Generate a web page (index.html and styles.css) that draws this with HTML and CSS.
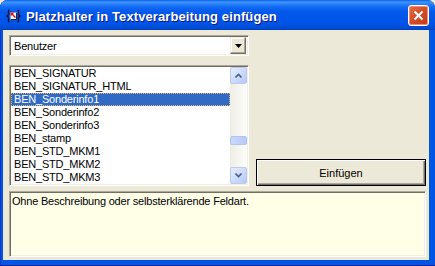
FILE: index.html
```html
<!DOCTYPE html>
<html lang="de">
    <head>
        <meta charset="UTF-8">
        <title>Platzhalter in Textverarbeitung einfügen</title>
        <link rel="stylesheet" href="styles.css">
    </head>
    <body>
        <div class="window">
            <div class="titlebar">
                <svg class="app-icon" width="15" height="14" viewBox="0 0 15 14">
                    <path d="M3.5 1.5 H2.5 V5.5 L1 7 L2.5 8.5 V12.5 H3.5" fill="none" stroke="#1a1030" stroke-width="1.3"/>
                    <path d="M11.5 1.5 H12.5 V5.5 L14 7 L12.5 8.5 V12.5 H11.5" fill="none" stroke="#1a1030" stroke-width="1.3"/>
                    <rect x="4.5" y="3.5" width="6" height="7" fill="#ffffff"/>
                    <path d="M4.5 3.5 H8.5 L4.5 7.5 Z" fill="#e02020"/>
                    <path d="M5.5 4.5 L9.5 8.5" stroke="#d01818" stroke-width="1.4"/>
                    <path d="M5 10.5 H10.5 V4" fill="none" stroke="#202020" stroke-width="1"/>
                </svg>
                <span class="title">Platzhalter in Textverarbeitung einfügen</span>
                <button class="close" type="button">
                    <svg width="11" height="11" viewBox="0 0 11 11">
                        <path d="M1.5 1.5 L9.5 9.5 M9.5 1.5 L1.5 9.5" stroke="#ffffff" stroke-width="2"/>
                    </svg>
                </button>
            </div>
            <div class="client">
                <div class="top">
                    <div class="left">
                        <div class="combo">
                            <span class="combo-value">Benutzer</span>
                            <span class="combo-btn">
                                <svg width="7" height="4" viewBox="0 0 7 4"><path d="M0 0 H7 L3.5 4 Z" fill="#000"/></svg>
                            </span>
                        </div>
                        <div class="listbox">
                            <ul class="items">
                                <li>BEN_SIGNATUR</li>
                                <li>BEN_SIGNATUR_HTML</li>
                                <li class="selected">BEN_Sonderinfo1</li>
                                <li>BEN_Sonderinfo2</li>
                                <li>BEN_Sonderinfo3</li>
                                <li>BEN_stamp</li>
                                <li>BEN_STD_MKM1</li>
                                <li>BEN_STD_MKM2</li>
                                <li>BEN_STD_MKM3</li>
                            </ul>
                            <div class="scrollbar">
                                <span class="sb-btn">
                                    <svg width="7" height="5" viewBox="0 0 7 5"><path d="M0.5 4.5 L3.5 1.5 L6.5 4.5" fill="none" stroke="#4d6185" stroke-width="1.6"/></svg>
                                </span>
                                <div class="sb-track"><span class="sb-thumb"></span></div>
                                <span class="sb-btn">
                                    <svg width="7" height="5" viewBox="0 0 7 5"><path d="M0.5 0.5 L3.5 3.5 L6.5 0.5" fill="none" stroke="#4d6185" stroke-width="1.6"/></svg>
                                </span>
                            </div>
                        </div>
                    </div>
                    <button class="insert" type="button">Einfügen</button>
                </div>
                <div class="desc">Ohne Beschreibung oder selbsterklärende Feldart.</div>
            </div>
        </div>
    </body>
</html>
```

FILE: styles.css
```css
body {
    margin: 0;
    font-family: "Liberation Sans", Arial, sans-serif;
    font-size: 11px;
    letter-spacing: -0.2px;
    background: #ece9d8;
}
.window {
    width: 435px;
    height: 266px;
    display: flex;
    flex-direction: column;
    background: #0055e5;
    border-radius: 8px 8px 0 0;
    box-shadow: inset 0 -1px 0 #001ea0, inset 1px 0 0 #0a33c8;
    overflow: hidden;
}
.titlebar {
    height: 30px;
    flex: none;
    display: flex;
    align-items: center;
    padding: 0 6px 0 6px;
    box-sizing: border-box;
    background: linear-gradient(to bottom, #0a5fe8 0px, #3d95ff 2px, #2a82fa 4px, #1169f2 7px, #0459ec 12px, #0055e9 20px, #0052e2 25px, #0048cc 29px, #003cb8 30px);
}
.app-icon {
    flex: none;
    margin-top: 1px;
}
.title {
    margin-left: 5px;
    margin-top: 3px;
    color: #ffffff;
    font-weight: bold;
    font-size: 13px;
    letter-spacing: 0.1px;
    text-shadow: 1px 1px 0 #0a1883;
    white-space: nowrap;
}
.close {
    margin-left: auto;
    width: 21px;
    height: 21px;
    padding: 0;
    border: 1px solid #ffffff;
    border-radius: 3px;
    background: linear-gradient(135deg, #e8704c 0%, #d8502c 40%, #c23a18 100%);
    box-shadow: inset 0 0 0 1px #f09070;
    display: flex;
    align-items: center;
    justify-content: center;
    margin-top: 1px;
}
.client {
    flex: 1;
    margin: 0 6px 6px 3px;
    padding: 5px 3px 3px 6px;
    background: #ece9d8;
    display: flex;
    flex-direction: column;
    gap: 5px;
}
.top {
    display: grid;
    grid-template-columns: 240px 1fr;
    column-gap: 7px;
}
.left {
    display: flex;
    flex-direction: column;
    gap: 9px;
}
.combo,
.listbox,
.desc {
    border: 1px solid;
    border-color: #aca899 #ffffff #ffffff #aca899;
    box-shadow: inset 1px 1px 0 #716f64, inset -1px -1px 0 #f1efe2;
}
.combo {
    height: 21px;
    box-sizing: border-box;
    background: #ffffff;
    display: flex;
    align-items: center;
    padding: 2px;
}
.combo-value {
    flex: 1;
    padding-left: 2px;
}
.combo-btn {
    width: 16px;
    height: 17px;
    box-sizing: border-box;
    background: #ece9d8;
    border: 1px solid;
    border-color: #f1efe2 #716f64 #716f64 #f1efe2;
    box-shadow: inset -1px -1px 0 #aca899, inset 1px 1px 0 #ffffff;
    display: flex;
    align-items: center;
    justify-content: center;
}
.listbox {
    height: 121px;
    box-sizing: border-box;
    padding: 1px;
    background: #ffffff;
    display: flex;
}
.items {
    flex: 1;
    margin: 0;
    padding: 0;
    list-style: none;
}
.items li {
    height: 13px;
    line-height: 13px;
    padding-left: 3px;
    box-sizing: border-box;
    white-space: nowrap;
}
.items li.selected {
    background: #316ac5;
    color: #ffffff;
    border: 1px dotted #e8b468;
    line-height: 11px;
    padding-left: 2px;
}
.scrollbar {
    width: 17px;
    display: flex;
    flex-direction: column;
    background: linear-gradient(to right, #eeede5, #fdfdfa);
}
.sb-btn {
    height: 17px;
    box-sizing: border-box;
    border: 1px solid #bac9ef;
    border-radius: 2px;
    background: linear-gradient(135deg, #e6eefc 0%, #c9d8fb 60%, #b4c8f6 100%);
    display: flex;
    align-items: center;
    justify-content: center;
}
.sb-track {
    flex: 1;
    padding-top: 52px;
}
.sb-thumb {
    display: block;
    height: 9px;
    box-sizing: border-box;
    border: 1px solid #b0c4f2;
    border-radius: 2px;
    background: linear-gradient(to right, #c9d8fc, #b8cbf8);
}
.insert {
    align-self: end;
    height: 27px;
    margin: 0;
    padding: 0;
    font: inherit;
    color: #000000;
    background: #ece9d8;
    border: 1px solid #000000;
    box-shadow: inset 1px 1px 0 #ffffff, inset -1px -1px 0 #716f64, inset -2px -2px 0 #aca899;
}
.desc {
    flex: 1;
    background: #ffffe8;
    padding: 3px 2px;
    line-height: 13px;
}
```
